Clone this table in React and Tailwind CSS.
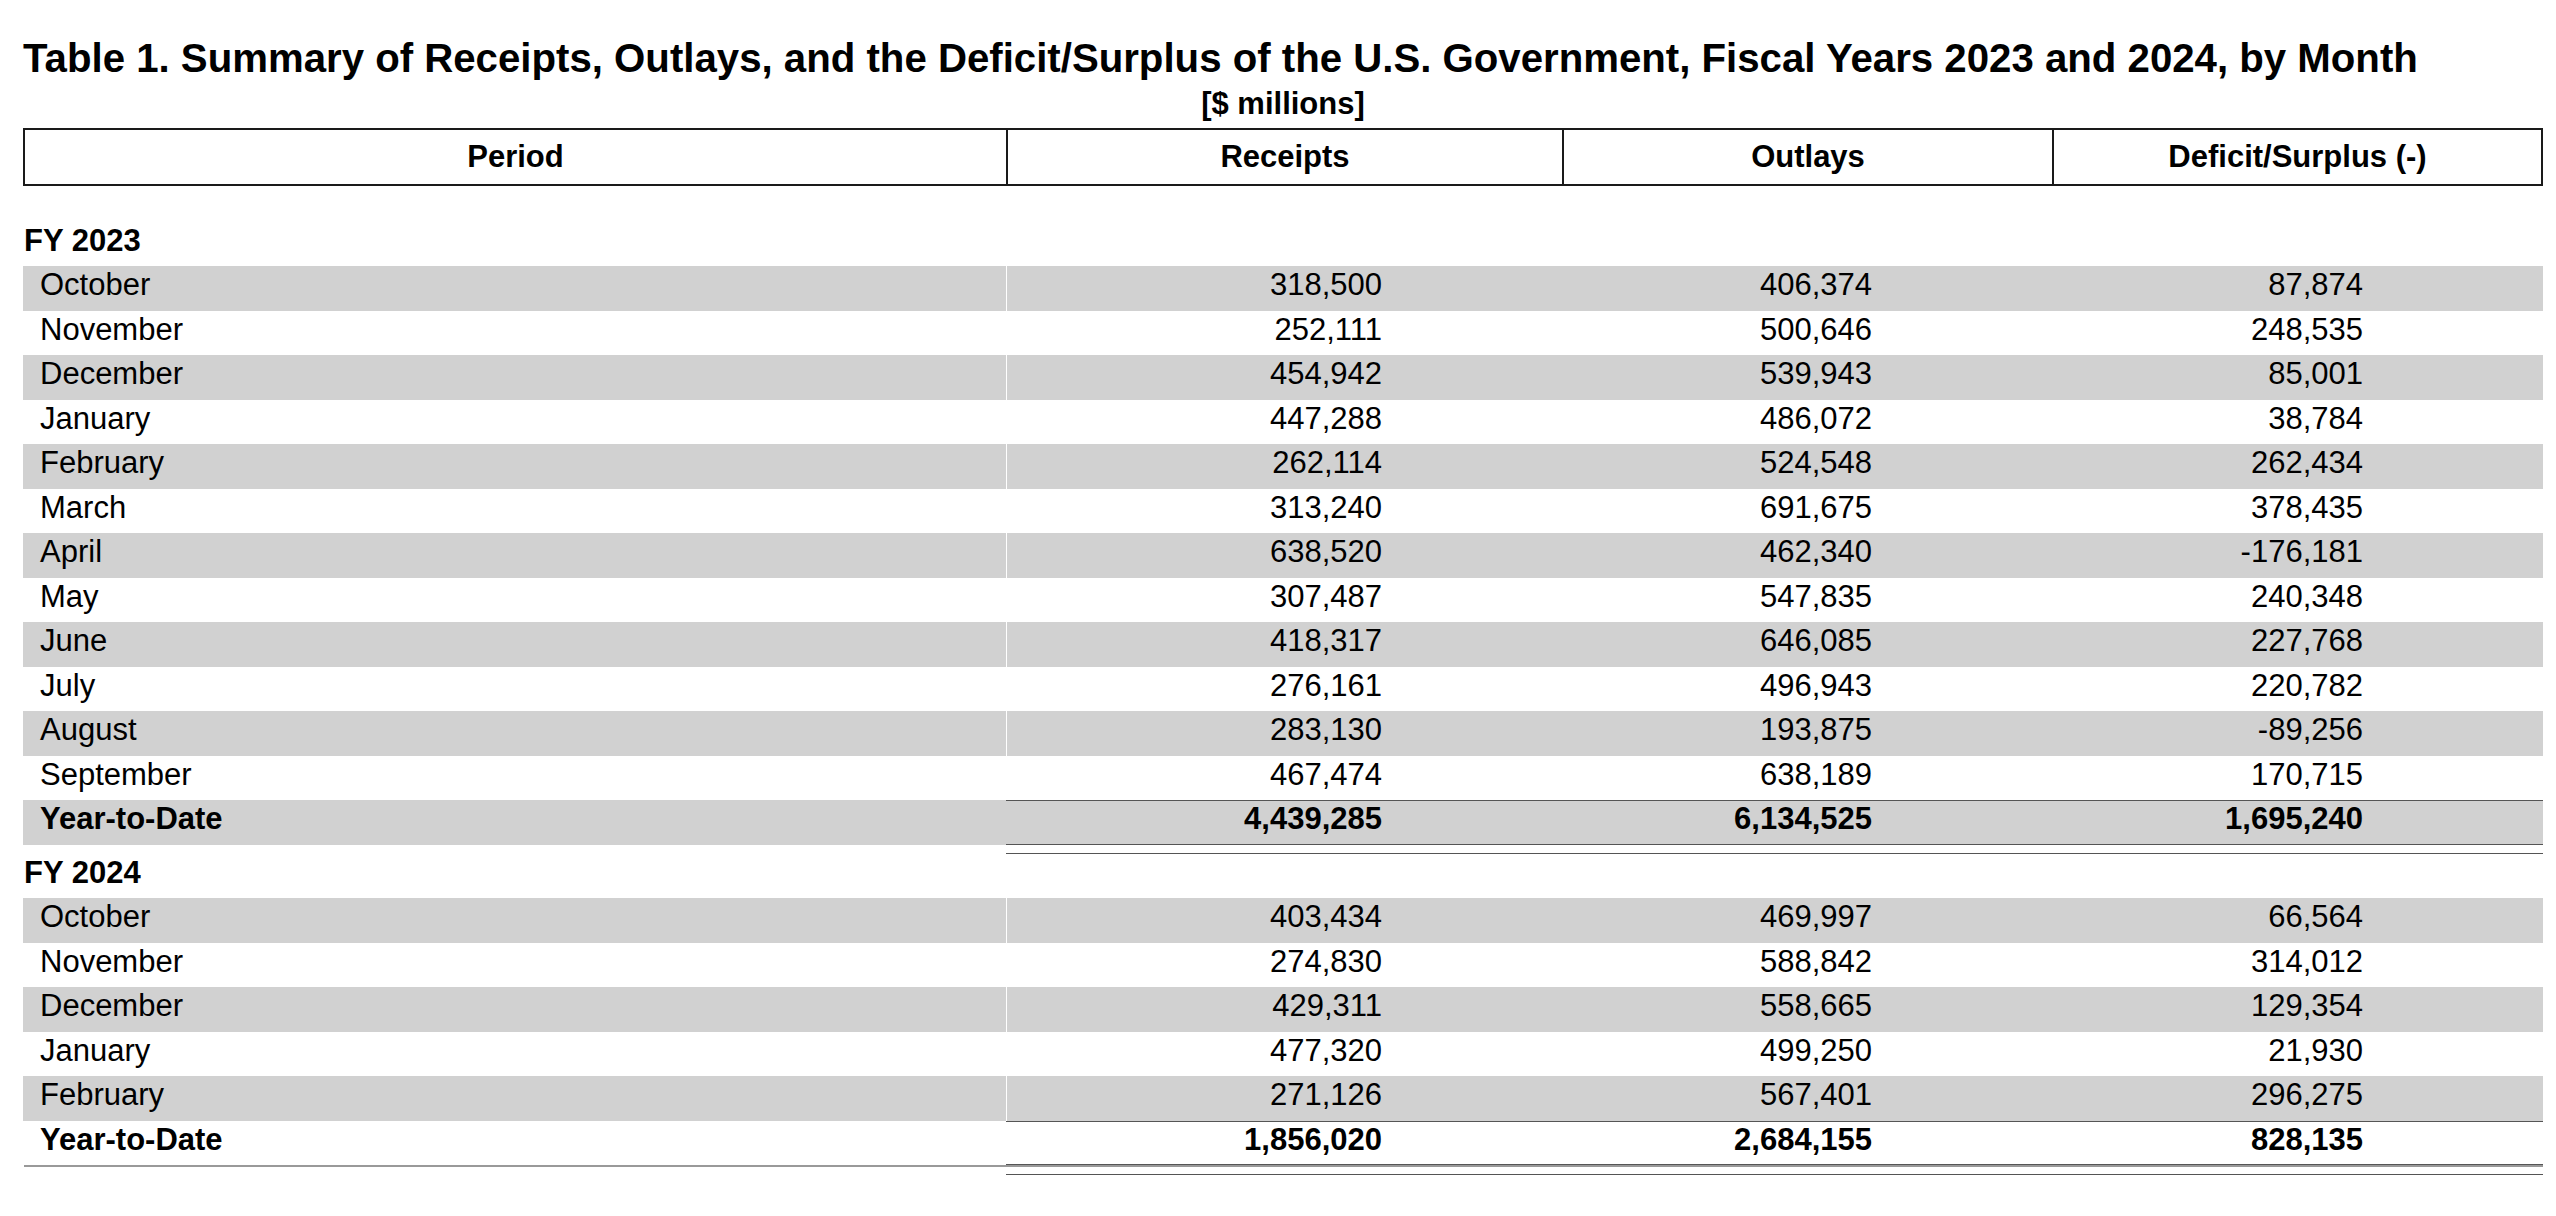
import clsx from 'clsx';

const fy2023 = [
  ['October', '318,500', '406,374', '87,874'],
  ['November', '252,111', '500,646', '248,535'],
  ['December', '454,942', '539,943', '85,001'],
  ['January', '447,288', '486,072', '38,784'],
  ['February', '262,114', '524,548', '262,434'],
  ['March', '313,240', '691,675', '378,435'],
  ['April', '638,520', '462,340', '-176,181'],
  ['May', '307,487', '547,835', '240,348'],
  ['June', '418,317', '646,085', '227,768'],
  ['July', '276,161', '496,943', '220,782'],
  ['August', '283,130', '193,875', '-89,256'],
  ['September', '467,474', '638,189', '170,715'],
];
const ytd2023 = ['Year-to-Date', '4,439,285', '6,134,525', '1,695,240'];

const fy2024 = [
  ['October', '403,434', '469,997', '66,564'],
  ['November', '274,830', '588,842', '314,012'],
  ['December', '429,311', '558,665', '129,354'],
  ['January', '477,320', '499,250', '21,930'],
  ['February', '271,126', '567,401', '296,275'],
];
const ytd2024 = ['Year-to-Date', '1,856,020', '2,684,155', '828,135'];

const cols = 'grid grid-cols-[983px_556px_490px_491px]';

const Row = ({ row, shaded, ytd }) => (
  <div className={clsx(cols, 'h-[44.5px] leading-[36px]', shaded && 'bg-[#d1d1d1]', ytd && 'font-bold')}>
    <div className="pl-[17px] pt-[1px]">{row[0]}</div>
    {row.slice(1).map((v, i) => (
      <div
        key={i}
        className={clsx(
          'text-right pr-[180px]',
          ytd ? 'border-y border-[#555]' : 'pt-[1px]',
          shaded && i === 0 && !ytd && 'border-l border-white'
        )}
      >
        {v}
      </div>
    ))}
  </div>
);

const Section = ({ label, rows, ytd }) => (
  <>
    <div className={clsx(cols, 'h-[44.5px] leading-[36px] font-bold')}>
      <div className="pl-[1px] pt-[1px]">{label}</div>
    </div>
    {rows.map((r, i) => (
      <Row key={r[0]} row={r} shaded={i % 2 === 0} />
    ))}
    <Row row={ytd} shaded={rows.length % 2 === 0} ytd />
  </>
);

// spacer row whose number columns carry the second line of the double rule
const DoubleRule = ({ h }) => (
  <div className={clsx(cols, h)}>
    <div />
    <div className="border-b border-[#555]" />
    <div className="border-b border-[#555]" />
    <div className="border-b border-[#555]" />
  </div>
);

export default function App() {
  return (
    <div className="min-h-screen bg-white text-black font-['Liberation_Sans',Arial,Helvetica,sans-serif] text-[31px]">
      <div className="ml-[23px] w-[2520px] pt-[37px]">
        <h1 className="h-[44px] leading-[44px] text-[40.2px] font-bold whitespace-nowrap">
          Table 1. Summary of Receipts, Outlays, and the Deficit/Surplus of the U.S. Government, Fiscal Years 2023 and 2024, by Month
        </h1>
        <div className="mt-[5px] h-[36px] leading-[36px] text-center font-bold">[$ millions]</div>

        {/* column headings */}
        <div className="mt-[6px] grid grid-cols-[981px_556px_490px_489px] h-[58px] border-2 border-[#1a1a1a] font-bold">
          <div className="flex items-center justify-center">Period</div>
          <div className="flex items-center justify-center border-l-2 border-[#1a1a1a]">Receipts</div>
          <div className="flex items-center justify-center border-l-2 border-[#1a1a1a]">Outlays</div>
          <div className="flex items-center justify-center border-l-2 border-[#1a1a1a]">Deficit/Surplus (-)</div>
        </div>

        <div className="h-[35.5px]" />

        <Section label="FY 2023" rows={fy2023} ytd={ytd2023} />
        <DoubleRule h="h-[9px]" />

        <Section label="FY 2024" rows={fy2024} ytd={ytd2024} />
        <div className="ml-[1px] h-[2px] bg-[#999]" />
        <DoubleRule h="h-[8px]" />

        <p className="mt-[30px] pl-[44px] text-[30px]">Note: Details may not add to totals due to rounding.</p>
      </div>
    </div>
  );
}
